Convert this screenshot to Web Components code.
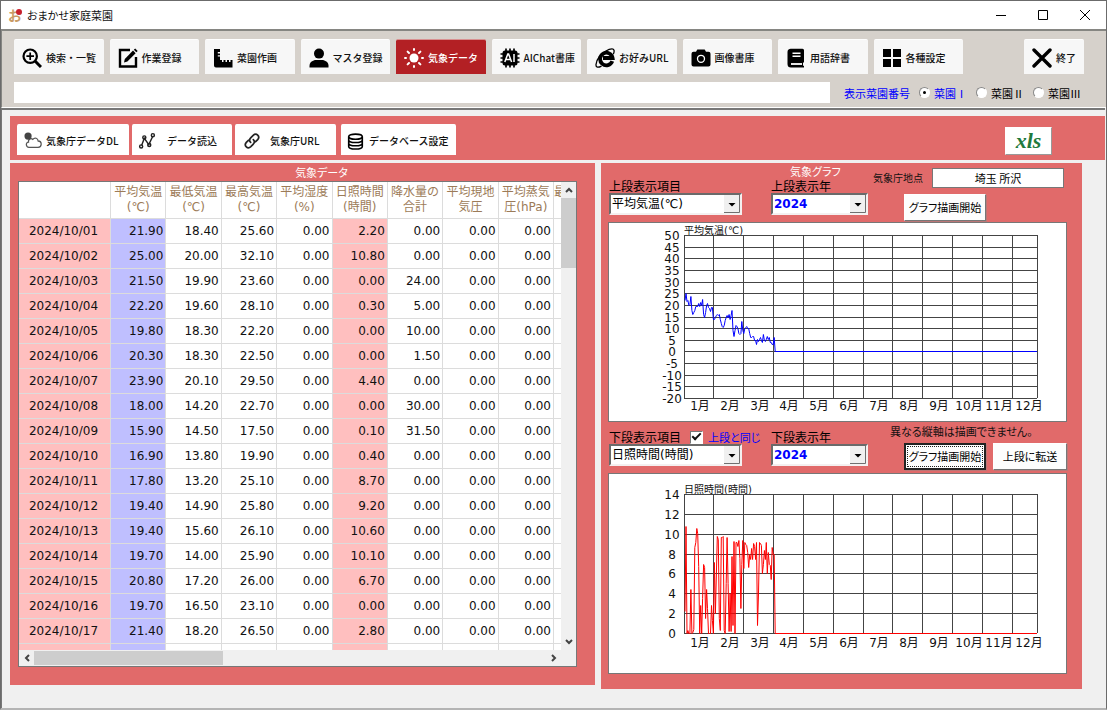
<!DOCTYPE html>
<html lang="ja">
<head>
<meta charset="utf-8">
<title>おまかせ家庭菜園</title>
<style>
html, body { margin: 0; }
body { font-family: "Noto Sans CJK JP", "DejaVu Sans", sans-serif; color: #111; background: #f0f0f0; }
</style>
</head>
<body>
<garden-app></garden-app>
<script>
const define = (name, html, setup) => {
  const template = document.createElement('template');
  template.innerHTML = html;
  customElements.define(name, class extends HTMLElement {
    connectedCallback() {
      if (this.shadowRoot) return;
      const root = this.attachShadow({ mode: 'open' });
      root.append(template.content.cloneNode(true));
      if (setup) setup(this, root);
    }
  });
};

const ICONS = {
  search: '<g fill="none" stroke="#000" stroke-width="2.2"><circle cx="8.2" cy="8.2" r="6.7"/><path d="M13 13l6 6" stroke-width="3"/><path d="M8.2 4.4v7.6M4.4 8.2h7.6" stroke-width="1.7"/></g>',
  edit: '<path d="M12 2H2v16.500h16V9" fill="none" stroke="#000" stroke-width="2.400"/><path d="M6 14.500l.8-3.500L15 2.600l2.600 2.600-8.200 8.400z"/><path d="M15.800 1.700L17.200.400l2.500 2.500-1.400 1.400z"/>',
  ruler: '<path d="M1 1h6v3H4.800v1.400H7v1.800H4.800v1.400H7V12h2v2h1.500v-2h2v2H14v-2h2v2h1.500v-2h2v7.500H3a2 2 0 0 1-2-2z"/>',
  user: '<circle cx="10" cy="5.600" r="5"/><path d="M.5 19.500v-1.800c0-3.500 3.500-5.700 6.500-5.700h6c3 0 6.500 2.200 6.500 5.700v1.800z"/>',
  sun: '<g fill="#fff"><circle cx="10" cy="10" r="4.500"/><g stroke="#fff" stroke-width="2" stroke-linecap="round"><path d="M10 1v1M10 18v1M1 10h1M18 10h1M3.600 3.600l1.400 1.400M15 15l1.400 1.400M3.600 16.400L5 15M15 5l1.400-1.400"/></g></g>',
  chip: '<rect x="2.500" y="2.500" width="15" height="15" rx="2.500"/><path d="M6 .5v19M10 .5v19M14 .5v19M.5 6h19M.5 10h19M.5 14h19" stroke="#000" stroke-width="1.700"/><path d="M4.800 14L7.800 6h.8l3 8M6 11.500h4.300M14 6v8" fill="none" stroke="#fff" stroke-width="1.500"/>',
  ie: '<path d="M17.300 13.200a6.300 6.300 0 1 1 .3-3.200H8" fill="none" stroke="#000" stroke-width="3.800"/><path d="M18.300 6.200c1.500-3.300.8-5.400-1.300-5.400-2.200 0-4.500 1.200-6.500 2.400M4.500 8.500C2.500 11 1.200 14 1 16.500c-.3 3.300 2.200 3.300 5.500 1.600" fill="none" stroke="#000" stroke-width="1.300"/>',
  camera: '<path d="M2.500 3.800H5L6.300 1.500h7.400L15 3.800h2.500a2 2 0 0 1 2 2v10.700a2 2 0 0 1-2 2h-15a2 2 0 0 1-2-2V5.800a2 2 0 0 1 2-2z"/><circle cx="10" cy="10.800" r="3.500" fill="none" stroke="#fff" stroke-width="1.300"/>',
  book: '<path d="M5 .8h11.500a1.500 1.500 0 0 1 1.500 1.500V14l-1 1v2.500l1 .6v1.400H5a3.500 3.500 0 0 1-3.500-3.500V4A3.200 3.200 0 0 1 5 .8z"/><path d="M6.500 5.200h8M6.500 8.200h8" stroke="#fff" stroke-width="1.400"/><path d="M5 16h11" stroke="#fff" stroke-width="1.800"/>',
  grid: '<path d="M1 1h8v8H1zM11 1h8v8h-8zM1 11h8v8H1zM11 11h8v8h-8z"/>',
  close: '<path d="M2 2l16 16M18 2L2 18" stroke="#000" stroke-width="3.400" stroke-linecap="round"/>',
  cloud: '<path d="M5.500 17h10a3.500 3.500 0 0 0 .2-7C15.500 7 12 5.500 9.800 8.200 7.500 6.500 4.300 8 5 11.200 1.500 11.500 2 17 5.500 17z" fill="#fff" stroke="#555" stroke-width="1.400"/><circle cx="4.500" cy="4.500" r="4" fill="#444"/>',
  nodes: '<g fill="none" stroke="#222" stroke-width="1.600"><path d="M4 15L7 7l5 7L16.300 5"/><circle cx="3.500" cy="16" r="1.700"/><circle cx="7" cy="6" r="1.700"/><circle cx="12.500" cy="14.500" r="1.700"/><circle cx="16.500" cy="3.500" r="1.700"/></g>',
  link: '<g fill="none" stroke="#222" stroke-width="1.900" stroke-linecap="round"><path d="M8.500 11.500c-2-2-1.200-3.800.3-5.300l2.500-2.500c3.500-3.300 8.200 1 5 4.800l-2.300 2.300"/><path d="M11.500 8.500c2 2 1.200 3.800-.3 5.300l-2.500 2.500c-3.500 3.300-8.200-1-5-4.800L6 9.200"/></g>',
  db: '<g fill="none" stroke="#000" stroke-width="1.900"><ellipse cx="10" cy="4.300" rx="8" ry="3"/><path d="M2 4.300v11.600c0 4 16 4 16 0V4.300M2 8.200c0 4 16 4 16 0M2 12c0 4 16 4 16 0"/></g>'
};

/* Toolbar push button: icon attribute plus slotted caption */
define('tool-button', `
<style>
:host { display: block; min-width: 0; }
button { box-sizing: border-box; width: 100%; height: var(--h, 35px); display: flex; align-items: center; gap: var(--gap, 4px);
  padding: 2px 0 0 var(--pad, 8px); border: 0; border-top: 1px solid #fff; border-radius: 2px 2px 0 0;
  background: var(--bg, #f7f7f7); color: var(--fg, #111); font: 500 10px/16px "Noto Sans CJK JP", sans-serif; white-space: nowrap; }
:host(.active) button { border-top-color: #d89090; }
svg { width: var(--icon, 20px); height: var(--icon, 20px); flex: none; }
</style>
<button type="button"><svg viewBox="0 0 20 20" aria-hidden="true"></svg><span><slot></slot></span></button>`,
(el, root) => { root.querySelector('svg').innerHTML = ICONS[el.getAttribute('icon')]; });

/* Bevelled push button */
define('push-button', `
<style>
:host { display: block; flex: none; }
button { box-sizing: border-box; width: 100%; height: 27px; padding: 0; border: 1px solid; border-color: #fff #777 #777 #fff;
  box-shadow: 1px 1px 0 #b77; background: #fdfdfd; color: #000; font: 11px/16px "Noto Sans CJK JP", sans-serif; font-feature-settings: "palt"; white-space: nowrap; }
:host([default]) button { border: 2px solid #222; outline: 1px dotted #222; outline-offset: -4px; }
</style>
<button type="button"><slot></slot></button>`);

/* Drop-down with the classic sunken frame */
define('combo-box', `
<style>
:host { display: block; }
label { display: block; font-size: 12px; line-height: 14px; white-space: nowrap; color: #000; }
.head { display: flex; align-items: center; height: 14px; gap: 5px; }
.frame { position: relative; }
select { appearance: none; box-sizing: border-box; display: block; width: 100%; height: 22px; margin: 0; padding: 0 18px 0 1px; border: 2px solid; border-color: #6a6a6a #f4f0f0 #f4f0f0 #6a6a6a;
  border-radius: 0; background: #fff; color: #000; font: 12px/16px "DejaVu Sans", "Noto Sans CJK JP", sans-serif; }
:host([strong]) select { font-weight: bold; color: #00f; }
svg { position: absolute; right: 2px; top: 2px; width: 16px; height: 18px; pointer-events: none; }
</style>
<div class="head"><label for="s"></label><slot name="extra"></slot></div>
<div class="frame"><select id="s"><option></option></select>
<svg viewBox="0 0 16 18" aria-hidden="true"><path d="M0 0h16v18H0z" fill="#f0f0f0"/><path d="M15.500 0v17.500H0" fill="none" stroke="#707070"/><path d="M4.500 8h7L8 11.500z"/></svg></div>`,
(el, root) => {
  root.querySelector('label').textContent = el.getAttribute('label');
  root.querySelector('option').textContent = el.getAttribute('value');
});

define('same-check', `
<style>
:host { display: block; }
label { display: flex; align-items: center; gap: 5px; color: #00f; font-size: 11px; line-height: 14px; white-space: nowrap; font-feature-settings: "palt"; }
input { appearance: none; box-sizing: border-box; width: 13px; height: 13px; margin: 0 0 0 4px; border: 1px solid; border-color: #777 #fff #fff #777; background: #fff; display: grid; place-items: center; }
input:checked::before { content: ""; width: 7px; height: 3px; border: solid #111; border-width: 0 0 2px 2px; transform: rotate(-45deg); margin-bottom: 3px; }
</style>
<label><input type="checkbox" checked>上段と同じ</label>`);

define('title-bar', `
<style>
:host { display: flex; align-items: center; height: 28px; background: #fff; padding: 0 15px 0 7px; gap: 5px; }
.logo { position: relative; width: 14px; font-size: 14px; line-height: 18px; font-weight: 700; color: #c99b66; }
.logo svg { position: absolute; right: 0; top: 3px; width: 6px; height: 6px; }
h1 { flex: 1; margin: 0; font-size: 11px; line-height: 16px; font-weight: 400; font-feature-settings: "palt"; }
nav { display: flex; gap: 30px; }
button { width: 12px; height: 12px; padding: 0; border: 0; background: none; display: block; }
button svg { display: block; fill: none; stroke: #000; }
</style>
<span class="logo">お<svg viewBox="0 0 6 6" aria-hidden="true"><circle cx="3" cy="3" r="3" fill="#c8202c"/></svg></span>
<h1>おまかせ家庭菜園</h1>
<nav>
<button type="button" aria-label="最小化"><svg width="12" height="12"><path d="M1 6.500h10"/></svg></button>
<button type="button" aria-label="最大化"><svg width="12" height="12"><path d="M1.500 1.500h9v9h-9z"/></svg></button>
<button type="button" aria-label="閉じる"><svg width="12" height="12"><path d="M1 1l10 10M11 1L1 11"/></svg></button>
</nav>`);

define('main-menu', `
<style>
:host { display: block; background: #d6d1cb; border: solid #868682; border-width: 2px 0 0 1px; border-bottom: 1px solid #fff; padding: 8px 22px 4px 12px; }
.tools { display: flex; }
.tabs { flex: 1; display: grid; grid-template-columns: repeat(10, minmax(0, 1fr)); gap: 6px; margin-right: 61px; }
.active { --bg: #b32024; --fg: #fff; }
.exit { width: 60px; }
.row { display: flex; align-items: center; margin-top: 8px; }
.msg { flex: 1; min-width: 0; box-sizing: border-box; height: 21px; border: 0; padding: 0 4px; background: #fff; font: 12px "Noto Sans CJK JP", sans-serif; }
fieldset { display: flex; align-items: center; margin: 0; padding: 0 3px 0 14px; border: 0; font-size: 11px; line-height: 16px; gap: 9px; white-space: nowrap; }
.cap { color: #00f; }
label { display: flex; align-items: center; gap: 4px; color: #000; }
label.on { color: #00f; }
input[type=radio] { appearance: none; box-sizing: border-box; width: 11px; height: 11px; margin: 0; border: 1px solid; border-color: #888 #fff #fff #888; border-radius: 50%; background: #fff; display: grid; place-items: center; }
input[type=radio]:checked::before { content: ""; width: 3px; height: 3px; border-radius: 50%; background: #000; }
</style>
<div class="tools"><div class="tabs">
<tool-button icon="search">検索・一覧</tool-button>
<tool-button icon="edit">作業登録</tool-button>
<tool-button icon="ruler">菜園作画</tool-button>
<tool-button icon="user">マスタ登録</tool-button>
<tool-button icon="sun" class="active">気象データ</tool-button>
<tool-button icon="chip">AIChat書庫</tool-button>
<tool-button icon="ie">お好みURL</tool-button>
<tool-button icon="camera">画像書庫</tool-button>
<tool-button icon="book">用語辞書</tool-button>
<tool-button icon="grid">各種設定</tool-button>
</div><tool-button icon="close" class="exit">終了</tool-button></div>
<div class="row"><input class="msg" type="text" aria-label="メッセージ" readonly>
<fieldset aria-label="表示菜園番号"><span class="cap">表示菜園番号</span>
<label class="on"><input type="radio" name="g" checked>菜園Ⅰ</label>
<label><input type="radio" name="g">菜園Ⅱ</label>
<label><input type="radio" name="g">菜園Ⅲ</label></fieldset></div>`);

define('weather-tools', `
<style>
:host { display: flex; align-items: flex-start; background: #e16a6a; padding: 8px 53px 5px 7px; gap: 3px; --h: 31px; --bg: #fff; }
.dl { width: 112px; --pad: 7px; --icon: 18px; }
.read { width: 100px; --pad: 6px; --icon: 18px; --gap: 11px; }
.url { width: 101px; --icon: 18px; --gap: 9px; }
.db { width: 115px; margin-left: 2px; --pad: 6px; --icon: 17px; --gap: 5px; }
.xls { margin: 3px 0 0 auto; width: 47px; height: 28px; padding: 0; border: 1px solid; border-color: #fff #999 #999 #fff; background: #fff; color: #1f7a3d; font: italic bold 22px/22px "Liberation Serif", serif; }
</style>
<tool-button class="dl" icon="cloud">気象庁データDL</tool-button>
<tool-button class="read" icon="nodes">データ読込</tool-button>
<tool-button class="url" icon="link">気象庁URL</tool-button>
<tool-button class="db" icon="db">データベース設定</tool-button>
<button type="button" class="xls">xls</button>`);

const ROWS = `01 21.90 18.40 25.60 2.20 0.00
02 25.00 20.00 32.10 10.80 0.00
03 21.50 19.90 23.60 0.00 24.00
04 22.20 19.60 28.10 0.30 5.00
05 19.80 18.30 22.20 0.00 10.00
06 20.30 18.30 22.50 0.00 1.50
07 23.90 20.10 29.50 4.40 0.00
08 18.00 14.20 22.70 0.00 30.00
09 15.90 14.50 17.50 0.10 31.50
10 16.90 13.80 19.90 0.40 0.00
11 17.80 13.20 25.10 8.70 0.00
12 19.40 14.90 25.80 9.20 0.00
13 19.40 15.60 26.10 10.60 0.00
14 19.70 14.00 25.90 10.10 0.00
15 20.80 17.20 26.00 6.70 0.00
16 19.70 16.50 23.10 0.00 0.00
17 21.40 18.20 26.50 2.80 0.00`.split('\n').map(r => r.split(' '));

define('weather-table', `
<style>
:host { display: flex; flex-direction: column; background: #e16a6a; padding: 0 18px 18px 8px; box-sizing: border-box; min-width: 0; }
h2 { margin: 0; padding-left: 48px; text-align: center; font-size: 11px; line-height: 18px; font-weight: 400; color: #fff; font-feature-settings: "palt"; }
.box { flex: 1 1 0; min-height: 0; border: 1px solid #777; background: #f0f0f0; display: grid; grid-template: minmax(0, 1fr) 16px / minmax(0, 1fr) 15px; }
.view { overflow: hidden; background: #fff; }
table { width: 100%; table-layout: fixed; border-collapse: separate; border-spacing: 0; font: 12px/16px "DejaVu Sans", "Noto Sans CJK JP", sans-serif; }
.c0 { width: 92px; } .cl { width: 7px; }
th, td { box-sizing: border-box; padding: 0; border: solid #dcdcdc; border-width: 0 1px 1px 0; }
thead th { height: 37px; font-weight: 400; color: #9c7b58; white-space: nowrap; line-height: 15px; overflow: hidden; text-align: center; }
thead th:last-child, td:last-child { border-right: 0; }
thead th:last-child { text-align: left; text-overflow: clip; }
td, tbody th { height: 25px; text-align: right; padding-right: 2px; }
tbody th { background: #ffbfbf; font-weight: 400; text-align: center; }
td:nth-child(2) { background: #bfbfff; }
td:nth-child(6) { background: #ffbfbf; }
.v, .h { display: flex; background: #f0f0f0; }
.v { flex-direction: column; }
.h { grid-column: 1 / 2; }
.v i { flex: 0 0 16px; } .h i { flex: 0 0 15px; }
i { display: grid; place-items: center; }
i svg { width: 8px; height: 8px; fill: none; stroke: #444; stroke-width: 2; }
.track { flex: 1; min-height: 0; }
.v .track b { display: block; height: 16%; background: #cdcdcd; }
.h .track b { display: block; width: 37%; height: 14px; margin-top: 1px; background: #cdcdcd; }
</style>
<h2>気象データ</h2>
<div class="box">
<div class="view"><table>
<colgroup><col class="c0"><col><col><col><col><col><col><col><col><col class="cl"></colgroup>
<thead><tr><th></th><th>平均気温<br>(℃)</th><th>最低気温<br>(℃)</th><th>最高気温<br>(℃)</th><th>平均湿度<br>(%)</th><th>日照時間<br>(時間)</th><th>降水量の<br>合計</th><th>平均現地<br>気圧</th><th>平均蒸気<br>圧(hPa)</th><th>最<br>&nbsp;</th></tr></thead>
<tbody></tbody></table></div>
<div class="v"><i><svg viewBox="0 0 8 8"><path d="M1 6l3-3 3 3"/></svg></i><div class="track"><b></b></div><i><svg viewBox="0 0 8 8"><path d="M1 2l3 3 3-3"/></svg></i></div>
<div class="h"><i><svg viewBox="0 0 8 8"><path d="M6 1L3 4l3 3"/></svg></i><div class="track"><b></b></div><i><svg viewBox="0 0 8 8"><path d="M2 1l3 3-3 3"/></svg></i></div>
</div>`,
(el, root) => {
  const zero = '0.00';
  root.querySelector('tbody').innerHTML = ROWS.map(([d, avg, lo, hi, sun, rain]) =>
    `<tr><th scope="row">2024/10/${d}</th>` + [avg, lo, hi, zero, sun, rain, zero, zero, ''].map(v => `<td>${v}</td>`).join('') + '</tr>').join('')
    + '<tr><th></th>' + '<td></td>'.repeat(9) + '</tr>';
});

const TEMP = [21.9,25,21.5,22.2,19.8,20.3,23.9,18,15.9,16.9,17.8,19.4,19.4,19.7,20.8,19.7,21.4,20,22.5,16,15,17,20,21,19,18.5,17.5,19,19,14,14,15,15.5,16,15.5,16,14,12,11,10.5,11.5,13.5,15,15.5,15,16,14,15.5,18,9,6.5,9,11.5,11,10,8,7.5,8,13,9,8,10,10.5,11,10,10,8,6,6,6.5,6.5,5,5,3,5.5,4.5,5.5,6,5,4,7.5,5,4.5,5.5,6.5,5.5,6,4,4,3,3,6,0];
const SUN = [2.2,10.8,0,.3,0,0,4.4,0,.1,.4,8.7,9.2,10.6,10.1,6.7,0,2.8,0,3.5,7,6.6,1.5,4.4,2.5,0,0,0,2.8,1.3,0,7.2,2,6,9.8,9.5,1.5,.3,9.7,9.7,9.8,.3,0,5,9.7,5,.2,4,.2,7.8,.8,9.3,0,9.2,9.2,8.8,9.4,7.6,2.5,7,9.4,6.5,9.2,9,8.9,8.2,6.6,8,7.5,8.6,7.5,9.1,8.8,7.5,9.2,.8,4,9.2,9.1,8.9,6,7,8.4,7.5,9.2,6,8.2,7,6.8,5.4,8.7,8,8,0];

/* Year line chart drawn as SVG: months across, value scale down the left */
define('year-chart', `
<style>
:host { display: block; border: 1px solid #777; background: #fff; }
svg { display: block; width: 100%; height: auto; }
text { font: 12px "DejaVu Sans", "Noto Sans CJK JP", sans-serif; fill: #111; text-anchor: middle; }
text.t { font-size: 10px; text-anchor: start; }
.g { stroke: #444; stroke-width: 1; fill: none; shape-rendering: crispEdges; }
.l { fill: none; stroke-width: 1; }
</style><svg role="img"></svg>`,
(el, root) => {
  const temp = el.getAttribute('kind') === 'temp';
  const c = temp ? { min: -20, max: 50, step: 5, top: 12, bottom: 175, h: 198, month: 12, data: TEMP, color: '#00f', title: '平均気温(℃)' }
                 : { min: 0, max: 14, step: 2, top: 20, bottom: 159, h: 199, month: 14, data: SUN, color: '#f00', title: '日照時間(時間)' };
  const left = 75, right = 428;
  const y = v => c.bottom - (v - c.min) * (c.bottom - c.top) / (c.max - c.min);
  const marks = [75, 104, 134, 164, 194, 224, 254, 283, 313, 343, 373, 403, 428];
  let s = `<text class="t" x="${left}" y="${c.top - 1}">${c.title}</text>`, grid = '';
  for (let v = c.min; v <= c.max; v += c.step) {
    const py = Math.round(y(v));
    grid += `M${left} ${py}.5H${right}`;
    s += `<text x="63" y="${py + 5}">${v}</text>`;
  }
  marks.forEach(m => grid += `M${m}.5 ${c.top}V${c.bottom}`);
  for (let m = 1; m <= 12; m++) s += `<text x="${61 + m * 30 - (m > 3 ? 1 : 0)}" y="${c.bottom + c.month}">${m}月</text>`;
  const pts = c.data.map((v, i) => `${(left + 1 + i * .98).toFixed(1)},${Math.round(y(v)) + .5}`).join(' ');
  const svg = root.querySelector('svg');
  svg.setAttribute('viewBox', `0 0 457 ${c.h}`);
  svg.setAttribute('aria-label', c.title);
  svg.innerHTML = s + `<path class="g" d="${grid}"/><polyline class="l" stroke="${c.color}" points="${pts} ${right},${Math.round(y(0)) + .5}"/>`;
});

define('weather-graphs', `
<style>
:host { display: block; background: #e16a6a; padding: 0 15px 15px 7px; box-sizing: border-box; min-width: 0; }
.ctl { display: grid; grid-template-columns: 162px 102px minmax(0, 1fr); padding-left: 1px; }
.top { height: 59px; } .low { height: 51px; }
.top .a { padding-top: 16px; }
.low .a, .low .b { padding-top: 8px; }
.a combo-box { width: 133px; } .b combo-box { width: 97px; }
h2 { margin: 0; padding-left: 19px; font-size: 11px; line-height: 16px; font-weight: 400; color: #fff; font-feature-settings: "palt"; }
.place { display: flex; align-items: center; gap: 9px; padding-top: 5px; font-size: 10px; line-height: 16px; white-space: nowrap; margin-right: 3px; }
.place input { flex: 1; min-width: 0; box-sizing: border-box; height: 20px; border: 1px solid #777; background: #fff; padding: 0; text-align: center; font: 11px "Noto Sans CJK JP", sans-serif; color: #000; }
.btns { display: flex; gap: 7px; margin-left: 31px; }
.top .btns { margin-top: 5px; }
.draw { width: 82px; } .send { width: 74px; }
p { margin: 0; padding: 1px 0 2px 17px; font-size: 11px; line-height: 16px; white-space: nowrap; font-feature-settings: "palt"; }
.low .btns { margin-top: 1px; }
</style>
<div class="ctl top">
<div class="a"><combo-box label="上段表示項目" value="平均気温(℃)"></combo-box></div>
<div class="b"><h2>気象グラフ</h2><combo-box strong label="上段表示年" value="2024"></combo-box></div>
<div><label class="place">気象庁地点<input type="text" value="埼玉 所沢"></label>
<div class="btns"><push-button class="draw">グラフ描画開始</push-button></div></div>
</div>
<year-chart kind="temp"></year-chart>
<div class="ctl low">
<div class="a"><combo-box label="下段表示項目" value="日照時間(時間)"><same-check slot="extra"></same-check></combo-box></div>
<div class="b"><combo-box strong label="下段表示年" value="2024"></combo-box></div>
<div><p>異なる縦軸は描画できません。</p>
<div class="btns"><push-button default class="draw">グラフ描画開始</push-button><push-button class="send">上段に転送</push-button></div></div>
</div>
<year-chart kind="sun"></year-chart>`);

define('garden-app', `
<style>
:host { display: flex; flex-direction: column; box-sizing: border-box; min-height: 100vh; border: 1px solid #6b6b6b; border-bottom: 2px solid #b4b4b4; }
main { flex: 1; border: solid #777; border-width: 2px 0 0 1px; margin-right: 1px; padding: 6px 0 18px 8px; }
.panels { display: grid; grid-template-columns: minmax(0, 585fr) minmax(0, 481fr); gap: 6px; margin: 3px 23px 0 0; }
weather-table { margin-bottom: 4px; }
</style>
<title-bar></title-bar>
<main-menu></main-menu>
<main>
<weather-tools></weather-tools>
<div class="panels"><weather-table></weather-table><weather-graphs></weather-graphs></div>
</main>`);
</script>
</body>
</html>
